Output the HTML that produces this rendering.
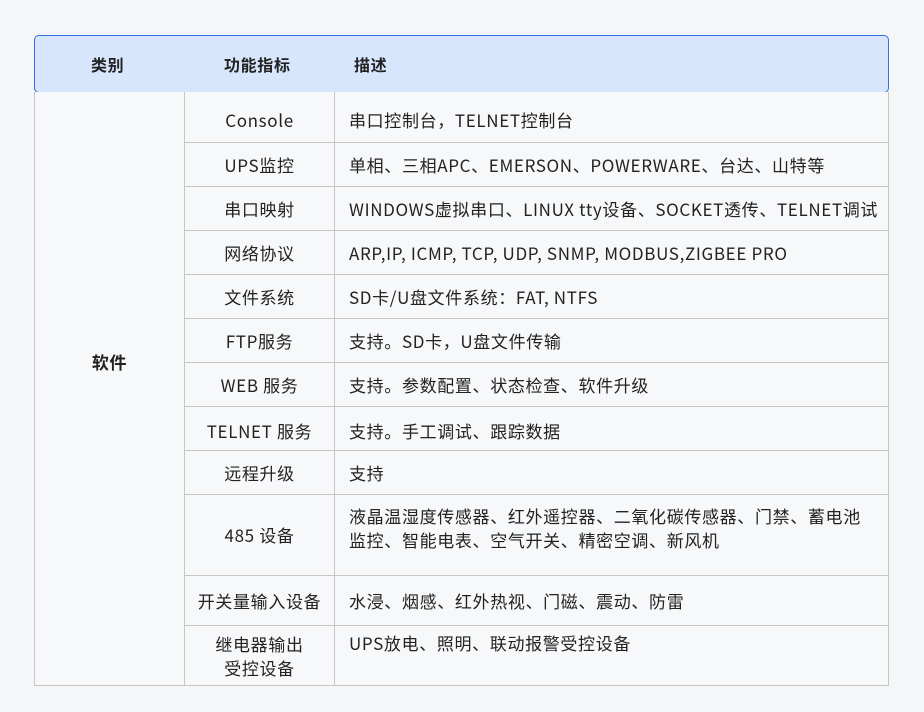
<!DOCTYPE html>
<html><head><meta charset="utf-8"><style>
body{margin:0;width:924px;height:712px;background:#f5f6f8;font-family:"Noto Sans CJK SC","Liberation Sans",sans-serif;color:#222;font-size:17px;letter-spacing:0.65px;position:relative;overflow:hidden}
.hd{position:absolute;left:34px;top:35px;width:853px;height:56px;background:#d8e6fd;border:1px solid #2f6fe8;border-radius:5px}
.hd span{position:absolute;top:16px;font-weight:bold;font-size:16px;line-height:24px}
.c{position:absolute;border-left:1px solid #c6c6c6;border-bottom:1px solid #c6c6c6;box-sizing:border-box;display:flex;align-items:center;background:#f7f8fa}
.m{justify-content:center;text-align:center;line-height:24px}
.l{padding-left:14px;line-height:24px;white-space:nowrap;border-right:1px solid #c6c6c6}
.t{align-items:flex-start}
</style></head><body>
<div class="hd"><span style="left:56px">类别</span><span style="left:189px">功能指标</span><span style="left:319px">描述</span></div>
<div class="c m" style="left:34px;top:92px;width:150px;height:594px;font-weight:bold;padding-bottom:54px">软件</div>

<div class="c m" style="left:184px;top:92px;width:150px;height:51px;padding-top:6px">Console</div>
<div class="c l" style="left:334px;top:92px;width:555px;height:51px;padding-top:6px">串口控制台，TELNET控制台</div>

<div class="c m" style="left:184px;top:143px;width:150px;height:44px">UPS监控</div>
<div class="c l" style="left:334px;top:143px;width:555px;height:44px">单相、三相APC、EMERSON、POWERWARE、台达、山特等</div>

<div class="c m" style="left:184px;top:187px;width:150px;height:44px">串口映射</div>
<div class="c l" style="left:334px;top:187px;width:555px;height:44px">WINDOWS虚拟串口、LINUX tty设备、SOCKET透传、TELNET调试</div>

<div class="c m" style="left:184px;top:231px;width:150px;height:44px">网络协议</div>
<div class="c l" style="left:334px;top:231px;width:555px;height:44px">ARP,IP, ICMP, TCP, UDP, SNMP, MODBUS,ZIGBEE PRO</div>

<div class="c m" style="left:184px;top:275px;width:150px;height:44px">文件系统</div>
<div class="c l" style="left:334px;top:275px;width:555px;height:44px">SD卡/U盘文件系统：FAT, NTFS</div>

<div class="c m" style="left:184px;top:319px;width:150px;height:44px">FTP服务</div>
<div class="c l" style="left:334px;top:319px;width:555px;height:44px">支持。SD卡，U盘文件传输</div>

<div class="c m" style="left:184px;top:363px;width:150px;height:44px">WEB 服务</div>
<div class="c l" style="left:334px;top:363px;width:555px;height:44px">支持。参数配置、状态检查、软件升级</div>

<div class="c m" style="left:184px;top:407px;width:150px;height:44px;padding-top:4px">TELNET 服务</div>
<div class="c l" style="left:334px;top:407px;width:555px;height:44px;padding-top:4px">支持。手工调试、跟踪数据</div>

<div class="c m" style="left:184px;top:451px;width:150px;height:44px">远程升级</div>
<div class="c l" style="left:334px;top:451px;width:555px;height:44px">支持</div>

<div class="c m" style="left:184px;top:495px;width:150px;height:81px">485 设备</div>
<div class="c l t" style="left:334px;top:495px;width:555px;height:81px;padding-top:9px;white-space:normal">液晶温湿度传感器、红外遥控器、二氧化碳传感器、门禁、蓄电池<br>监控、智能电表、空气开关、精密空调、新风机</div>

<div class="c m" style="left:184px;top:576px;width:150px;height:50px">开关量输入设备</div>
<div class="c l" style="left:334px;top:576px;width:555px;height:50px">水浸、烟感、红外热视、门磁、震动、防雷</div>

<div class="c m" style="left:184px;top:626px;width:150px;height:60px">继电器输出<br>受控设备</div>
<div class="c l t" style="left:334px;top:626px;width:555px;height:60px;padding-top:5px">UPS放电、照明、联动报警受控设备</div>
</body></html>
